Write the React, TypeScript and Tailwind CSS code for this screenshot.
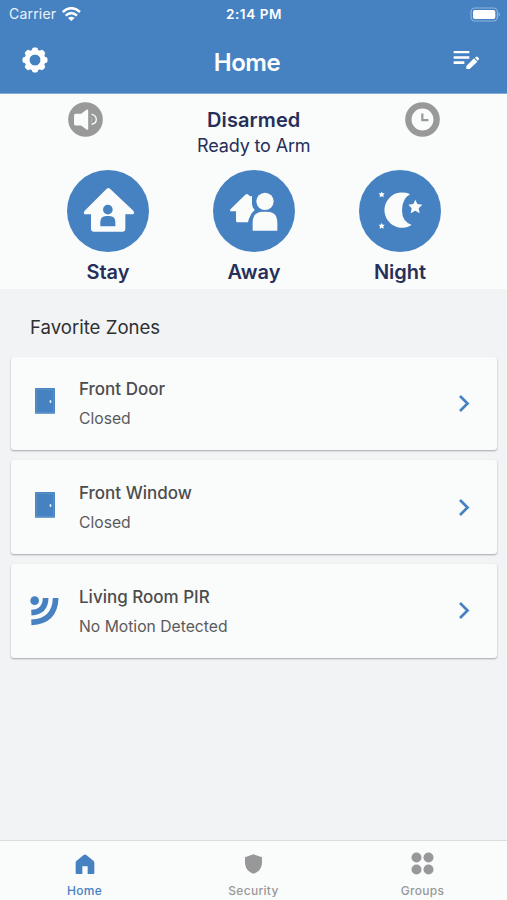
import React from "react";

function StatusBar() {
  return (
    <div className="grid h-7 grid-cols-[1fr_auto_1fr] items-center pl-[9px] pr-[6px] text-[14px] leading-7 text-white">
      <div className="flex items-center gap-[6px]">
        <span className="tracking-[0.2px] text-white/90">Carrier</span>
        <svg className="h-[14px] w-[19px]" viewBox="185 17 57 42">
          <g fill="none" stroke="#fff" strokeWidth="7.5">
            <path d="M187 32 Q213 9 239 32" />
            <path d="M196 43 Q213 28 230 43" />
          </g>
          <path d="M213 59 L203 50 Q213 42 223 50Z" fill="#fff" />
        </svg>
      </div>
      <span className="relative -left-px whitespace-nowrap text-center text-[13.5px] font-semibold tracking-[0.6px]">2:14 PM</span>
      <svg className="h-[15px] w-[31px] justify-self-end" viewBox="648 17 93 45">
        <rect x="651" y="20" width="79" height="39" rx="12" fill="none" stroke="#fff" strokeOpacity=".4" strokeWidth="3.5" />
        <rect x="657" y="26" width="67" height="27" rx="6" fill="#fff" />
        <path d="M734 33 Q740 39 734 46Z" fill="#fff" fillOpacity=".6" />
      </svg>
    </div>
  );
}

function Gear() {
  const teeth = [0, 45, 90, 135, 180, 225, 270, 315];
  return (
    <svg className="size-[26px]" viewBox="-39 -39 78 78">
      {teeth.map((a) => (
        <rect key={a} x="-9" y="-37.500" width="18" height="20" rx="6" fill="#fff" transform={`rotate(${a})`} />
      ))}
      <circle r="24" fill="none" stroke="#fff" strokeWidth="15" />
    </svg>
  );
}

function EditList() {
  return (
    <svg className="h-[20px] w-[27px]" viewBox="596 148 81 60" fill="#fff">
      <path d="M598 151h47v7h-47zM598 167h47v7h-47zM598 182h32v8h-32z" />
      <path d="M636 196l23-23 10 10-23 22h-10zM662 171l4-3q2-1 4 1l4 4q1 2-1 4l-3 3z" />
    </svg>
  );
}

function Speaker() {
  return (
    <svg className="size-[35px]" viewBox="53 20 104 104">
      <circle cx="105" cy="72" r="51.500" fill="#999" />
      <path d="M76 55h16l16-12q5-2 5 2v55q0 4-5 2L92 90H76q-5 0-5-5V60q0-5 5-5z" fill="#fafbfb" />
      <path d="M123 56q14 4 14 16t-14 14" fill="none" stroke="#fafbfb" strokeWidth="4" />
      <path d="M120 65q5 2 5 7t-5 7" fill="none" stroke="#c4c4c4" strokeWidth="2" />
    </svg>
  );
}

function Clock() {
  return (
    <svg className="size-[35px]" viewBox="75.500 20 104 104">
      <circle cx="127.500" cy="72" r="42" fill="#fafbfb" stroke="#999" strokeWidth="19" />
      <path d="M127 54v20h18" fill="none" stroke="#999" strokeWidth="6.500" />
    </svg>
  );
}

function StayIcon() {
  return (
    <svg className="size-[82px]" viewBox="36 28 246 246">
      <circle cx="159" cy="151" r="123" fill="#4682c1" />
      <path d="M155 84q5-4 10 0l70 66q5 6 0 11h-24v43q0 9-9 9h-85q-9 0-9-9v-43H88q-4-5 1-11z" fill="#fafbfb" />
      <circle cx="158.500" cy="147" r="14.500" fill="#4682c1" />
      <path d="M136 197v-13q0-18 18-18h9q18 0 18 18v13z" fill="#4682c1" />
    </svg>
  );
}

function AwayIcon() {
  return (
    <svg className="size-[82px]" viewBox="39 28 246 246">
      <circle cx="162" cy="151" r="123" fill="#4682c1" />
      <path d="M136 102q5-4 9 0l7 6v-2h4v24q0 9 8 18-15 14-20 37h-31q-5 0-5-5v-28H91q-3-3 1-7z" fill="#fafbfb" />
      <circle cx="195" cy="122" r="26" fill="#fafbfb" stroke="#4682c1" strokeWidth="0" />
      <path d="M158 210v-24q0-33 31-33h12q31 0 31 33v24z" fill="#fafbfb" />
    </svg>
  );
}

function NightIcon() {
  return (
    <svg className="size-[82px]" viewBox="42 28 246 246">
      <circle cx="165" cy="151" r="123" fill="#4682c1" />
      <g fill="#fafbfb">
        <path d="M195 101a53 53 0 1 0 5 92q-29-12-29-43 0-36 24-49z" />
        <path d="M211 117l6 13 15 2-11 11 3 15-13-8-14 8 3-15-10-11 15-2z" />
        <path d="M110 93l3 5 6 0-4 5 1 7-6-3-6 3 1-7-4-5 6 0zM110 187l3 5 6 0-4 5 1 7-6-3-6 3 1-7-4-5 6 0z" />
      </g>
    </svg>
  );
}

function Door() {
  return (
    <svg className="h-[26px] w-5" viewBox="105 265 60 78">
      <rect x="105" y="265" width="60" height="77" rx="2" fill="#4682c1" />
      <path d="M109 338V269h52v69z" fill="none" stroke="#76a3d2" strokeWidth="1.500" />
      <rect x="149" y="301" width="5" height="9" rx="2.500" fill="#e5eef7" />
    </svg>
  );
}

function Motion() {
  return (
    <svg className="mt-[5px] h-[30px] w-[29px]" viewBox="92 378 87 90">
      <circle cx="106" cy="392" r="13" fill="#4682c1" />
      <path d="M139 384q-1 42-43 44M169 384q-2 70-73 73" fill="none" stroke="#4682c1" strokeWidth="17" />
    </svg>
  );
}

function Mode({ label, icon }: { label: string; icon: React.ReactNode }) {
  return (
    <button className="flex w-[82px] flex-col items-center">
      {icon}
      <span className="mt-[7.500px] text-[20px] font-semibold leading-[26px] text-[#262f59]">{label}</span>
    </button>
  );
}

function Zone({ title, state, icon }: { title: string; state: string; icon: React.ReactNode }) {
  return (
    <div className="flex h-[93.500px] items-center rounded-[3px] bg-[#fafbfb] pr-[27px] shadow-[0_1px_2px_rgba(0,0,0,0.32)]">
      <div className="flex w-[68.500px] justify-center pb-[4px]">{icon}</div>
      <div className="flex-1 whitespace-nowrap pt-[1.500px] text-[#4c4c4d]">
        <div className="text-[17px] font-medium leading-[30px]">{title}</div>
        <div className="text-[15.700px] leading-[30px] text-[#5a5a5b]">{state}</div>
      </div>
      <svg className="h-[17px] w-[12px]" viewBox="0 0 12 17">
        <path d="M2 1 L9.500 8.500 L2 16" fill="none" stroke="#4682c1" strokeWidth="2.700" />
      </svg>
    </div>
  );
}

function Tab({ label, icon, color }: { label: string; icon: React.ReactNode; color: string }) {
  return (
    <div className={`flex flex-col items-center ${color}`}>
      <div className="flex h-[23px] items-center">{icon}</div>
      <span className="mt-[8px] text-[12px] font-medium leading-4 tracking-[0.3px]">{label}</span>
    </div>
  );
}

export default function App() {
  return (
    <div className="flex h-[900px] w-[507px] flex-col overflow-hidden bg-[#f2f3f5] font-['Inter','Liberation_Sans',sans-serif]">
      <header className="h-[94px] shrink-0 border-b border-[#82abd6] bg-[#4682c1]">
        <StatusBar />
        <div className="grid h-[65px] grid-cols-[1fr_auto_1fr] items-center px-[22px]">
          <div className="pb-[2px]"><Gear /></div>
          <h1 className="pr-[13px] pt-[4px] text-[24px] font-semibold leading-8 tracking-[-0.4px] text-white">Home</h1>
          <div className="flex justify-end pb-[2px] pr-[5px]"><EditList /></div>
        </div>
      </header>
      <section className="h-[195px] shrink-0 bg-[#fafbfb] pt-[7.500px]">
        <div className="flex h-[68px] justify-between pl-[67.500px] pr-[67px]">
          <Speaker />
          <div className="flex flex-col items-center pt-[5.500px] text-[#262f59]">
            <div className="text-[20px] font-semibold leading-[26px] tracking-[0.1px]">Disarmed</div>
            <div className="text-[18px] leading-[26px] tracking-[-0.15px]">Ready to Arm</div>
          </div>
          <Clock />
        </div>
        <div className="flex justify-between pl-[67px] pr-[66px]">
          <Mode label="Stay" icon={<StayIcon />} />
          <Mode label="Away" icon={<AwayIcon />} />
          <Mode label="Night" icon={<NightIcon />} />
        </div>
      </section>
      <main className="flex-1 px-[10.500px] pt-[23.500px]">
        <h2 className="mb-[16px] pl-[19.500px] text-[18.600px] leading-7 text-[#2f3032]">Favorite Zones</h2>
        <div className="flex flex-col gap-[10.300px]">
          <Zone title="Front Door" state="Closed" icon={<Door />} />
          <Zone title="Front Window" state="Closed" icon={<Door />} />
          <Zone title="Living Room PIR" state="No Motion Detected" icon={<Motion />} />
        </div>
      </main>
      <nav className="grid h-[60px] shrink-0 grid-cols-3 border-t border-[#dcddde] bg-[#fafbfb] pt-[11px]">
        <Tab
          label="Home"
          color="text-[#4682c1]"
          icon={
            <svg className="h-[20px] w-[20px]" viewBox="226 70 60 60" fill="currentColor">
              <path d="M252 73q4-3 8 0l21 17q3 3 3 6v31q0 3-3 3h-17v-23h-16v23h-17q-3 0-3-3V96q0-4 3-6z" />
            </svg>
          }
        />
        <Tab
          label="Security"
          color="text-[#98989a]"
          icon={
            <svg className="h-[20px] w-[19px]" viewBox="0 0 19 20" fill="currentColor">
              <path d="M9.500 .3 L18 3.300 V8 C18 14 15 18 9.500 19.800 C4 18 1 14 1 8 V3.300Z" />
            </svg>
          }
        />
        <Tab
          label="Groups"
          color="text-[#98989a]"
          icon={
            <svg className="h-[23px] w-[23px]" viewBox="0 0 23 23" fill="currentColor">
              <circle cx="5.500" cy="5.500" r="5" />
              <circle cx="17.500" cy="5.500" r="5" />
              <circle cx="5.500" cy="17.500" r="5" />
              <circle cx="17.500" cy="17.500" r="5" />
            </svg>
          }
        />
      </nav>
    </div>
  );
}
